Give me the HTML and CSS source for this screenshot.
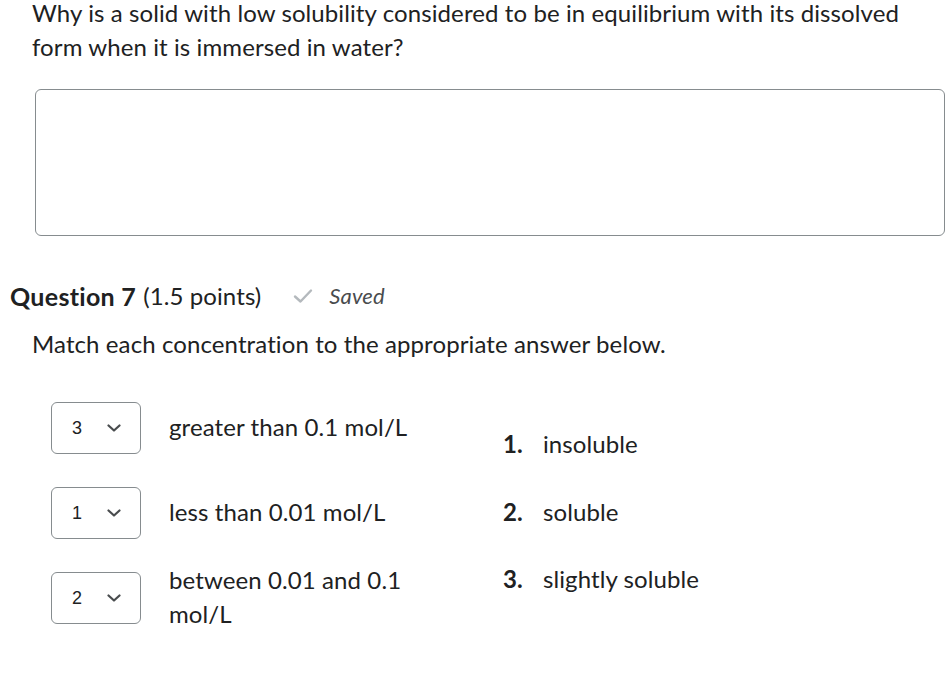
FILE: index.html
```html
<!DOCTYPE html>
<html lang="en">

<head>
    <meta charset="UTF-8">
    <meta name="viewport" content="width=device-width, initial-scale=1.0">
    <title>Quiz</title>
    <link rel="stylesheet" href="styles.css">
</head>

<body>
    <div class="prev-question">
        <p class="q-text">Why is a solid with low solubility considered to be in equilibrium with its dissolved form when it is immersed in water?</p>
        <div class="answer-box"></div>
    </div>

    <div class="question">
        <h2 class="q-title">
            <strong>Question 7</strong> (1.5 points)
            <span class="saved">
                <svg class="check" width="20" height="16" viewBox="0 0 20 16">
                    <path d="M2 8.5 L7.5 13.5 L18 2.5" fill="none" stroke="#b4b9bd" stroke-width="2.4" stroke-linecap="round" stroke-linejoin="round"/>
                </svg>
                <em>Saved</em>
            </span>
        </h2>
        <p class="q-prompt">Match each concentration to the appropriate answer below.</p>

        <div class="match">
            <div class="match-left">
                <div class="match-row">
                    <div class="dropdown">
                        <span class="dd-value">3</span>
                        <svg class="chevron" width="14" height="8" viewBox="0 0 14 8"><path d="M1.5 1.5 L7 6.5 L12.5 1.5" fill="none" stroke="#494c4e" stroke-width="2.2" stroke-linecap="round" stroke-linejoin="round"/></svg>
                    </div>
                    <div class="match-label">greater than 0.1 mol/L</div>
                </div>
                <div class="match-row">
                    <div class="dropdown">
                        <span class="dd-value">1</span>
                        <svg class="chevron" width="14" height="8" viewBox="0 0 14 8"><path d="M1.5 1.5 L7 6.5 L12.5 1.5" fill="none" stroke="#494c4e" stroke-width="2.2" stroke-linecap="round" stroke-linejoin="round"/></svg>
                    </div>
                    <div class="match-label">less than 0.01 mol/L</div>
                </div>
                <div class="match-row">
                    <div class="dropdown">
                        <span class="dd-value">2</span>
                        <svg class="chevron" width="14" height="8" viewBox="0 0 14 8"><path d="M1.5 1.5 L7 6.5 L12.5 1.5" fill="none" stroke="#494c4e" stroke-width="2.2" stroke-linecap="round" stroke-linejoin="round"/></svg>
                    </div>
                    <div class="match-label">between 0.01 and 0.1 mol/L</div>
                </div>
            </div>

            <ol class="choices">
                <li><span class="num">1.</span>insoluble</li>
                <li><span class="num">2.</span>soluble</li>
                <li><span class="num">3.</span>slightly soluble</li>
            </ol>
        </div>
    </div>
</body>

</html>
```

FILE: styles.css
```css
* {
    margin: 0;
    padding: 0;
    box-sizing: border-box;
}

body {
    font-family: Lato, "Open Sans", sans-serif;
    font-size: 24px;
    line-height: 34px;
    letter-spacing: 0.1px;
    color: #202122;
    background: #fff;
    width: 947px;
    overflow: hidden;
}

.prev-question {
    padding-left: 32px;
}

.q-text {
    margin-top: -4px;
}

.answer-box {
    margin-top: 25px;
    margin-left: 3px;
    width: 910px;
    height: 147px;
    border: 1px solid #868c8f;
    border-radius: 6px;
}

.question {
    margin-top: 43px;
}

.q-title {
    padding-left: 10px;
    font-size: 24px;
    font-weight: normal;
    display: flex;
    align-items: center;
}

.q-title strong {
    font-weight: bold;
    font-size: 25px;
    letter-spacing: 0.3px;
    margin-right: 7px;
}

.saved {
    display: flex;
    align-items: center;
    margin-left: 32px;
    font-size: 22px;
    color: #494c4e;
}

.check {
    margin-right: 16px;
}

.q-prompt {
    padding-left: 32px;
    margin-top: 14px;
}

.match {
    display: flex;
    margin-top: 25px;
    padding-left: 51px;
}

.match-left {
    display: flex;
    flex-direction: column;
    gap: 1px;
    width: 452px;
}

.match-row {
    display: flex;
    align-items: center;
    min-height: 84px;
}

.dropdown {
    flex: none;
    width: 90px;
    height: 52px;
    border: 1px solid #868c8f;
    border-radius: 6px;
    display: flex;
    align-items: center;
    padding-left: 20px;
}

.dd-value {
    font-family: "Liberation Sans", Arial, sans-serif;
    font-size: 18px;
    width: 35px;
    color: #202122;
}

.match-label {
    margin-left: 28px;
    width: 260px;
    margin-top: -2px;
}

.choices {
    list-style: none;
    padding-top: 41px;
}

.choices li {
    margin-bottom: 33.5px;
}

.choices .num {
    font-weight: bold;
    display: inline-block;
    width: 40px;
}
```
